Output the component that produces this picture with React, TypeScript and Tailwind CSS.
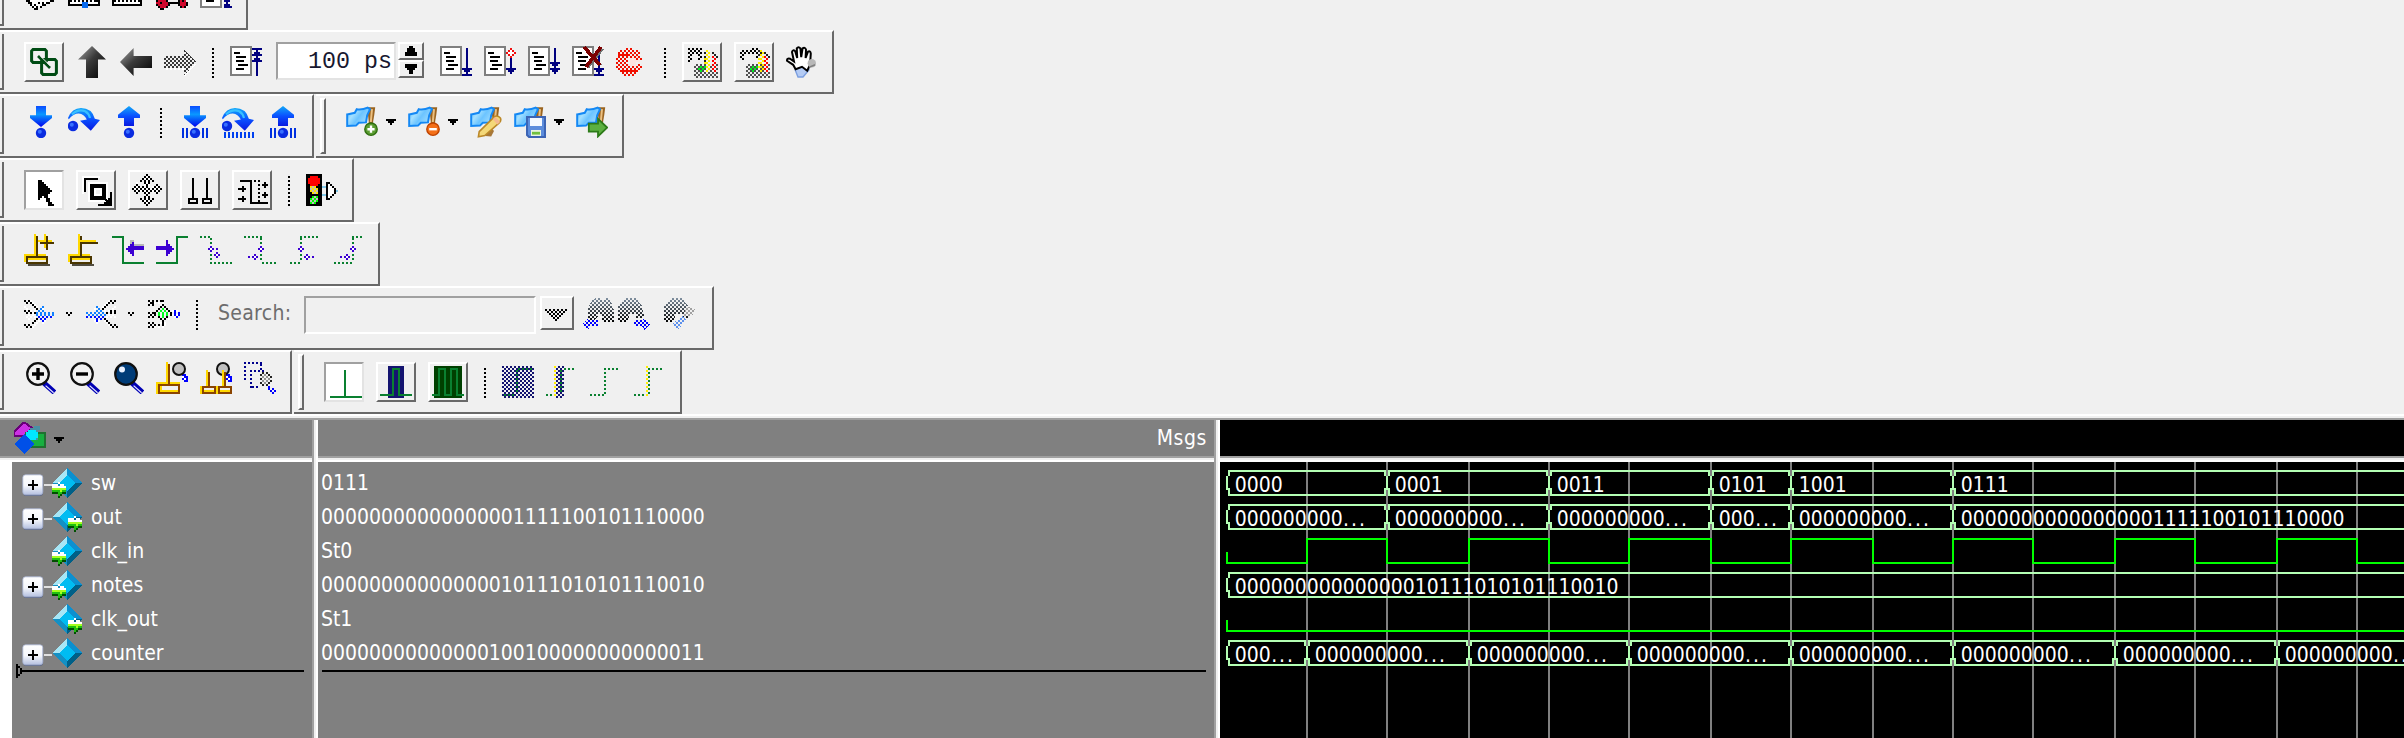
import React, { type ReactNode } from "react";

/* ---------- drawing helpers ---------- */

const NAVY = "#00007f";
const GREEN = "#0a8030";
const PURPLE = "#3c00d2";
const GOLD = "#ffd800";
const BROWN = "#4a3600";

type IconProps = { children: ReactNode; w?: number; h?: number; smooth?: boolean; className?: string };

/** One drawing unit is two screen pixels. */
function Icon({ children, w = 16, h = 16, smooth = false, className = "" }: IconProps) {
  return (
    <svg
      width={w * 2}
      height={h * 2}
      viewBox={`0 0 ${w} ${h}`}
      shapeRendering={smooth ? "auto" : "crispEdges"}
      className={`block shrink-0 ${className}`}
      fill="none"
    >
      {children}
    </svg>
  );
}

function Px({ rows, pal, x = 0, y = 0 }: { rows: string[]; pal: Record<string, string>; x?: number; y?: number }) {
  return (
    <>
      {rows.map((r, j) =>
        r.split("").map((c, i) =>
          pal[c] ? <rect key={`${i}-${j}`} x={x + i} y={y + j} width={1} height={1} fill={pal[c]} /> : null,
        ),
      )}
    </>
  );
}

const Stipple = ({ children }: { children: ReactNode }) => <g mask="url(#stipple)">{children}</g>;

function Defs() {
  return (
    <svg className="absolute h-0 w-0" width="0" height="0">
      <defs>
        <pattern id="checks" width="2" height="2" patternUnits="userSpaceOnUse">
          <rect width="1" height="1" fill="#fff" shapeRendering="crispEdges" />
          <rect x="1" y="1" width="1" height="1" fill="#fff" shapeRendering="crispEdges" />
        </pattern>
        <mask id="stipple" maskUnits="userSpaceOnUse" x="0" y="0" width="40" height="40">
          <rect width="40" height="40" fill="url(#checks)" />
        </mask>
        <linearGradient id="metal" x1="0" y1="0" x2="1" y2="1">
          <stop offset="0" stopColor="#a8a8a8" />
          <stop offset="0.45" stopColor="#3a3a3a" />
          <stop offset="1" stopColor="#000" />
        </linearGradient>
        <linearGradient id="azure" x1="0" y1="0" x2="0" y2="1">
          <stop offset="0" stopColor="#0a4cff" />
          <stop offset="0.4" stopColor="#0a98ff" />
          <stop offset="1" stopColor="#0000ee" />
        </linearGradient>
        <linearGradient id="azure2" x1="0" y1="0" x2="0" y2="1">
          <stop offset="0" stopColor="#12a8f8" />
          <stop offset="0.5" stopColor="#0a50ff" />
          <stop offset="1" stopColor="#0818e0" />
        </linearGradient>
        <linearGradient id="cloth" x1="0" y1="0" x2="1" y2=".6">
          <stop offset="0" stopColor="#4cb8ff" />
          <stop offset="0.35" stopColor="#a4e0ff" />
          <stop offset="0.6" stopColor="#6cc4ff" />
          <stop offset="1" stopColor="#a0dcff" />
        </linearGradient>
        <linearGradient id="binoc" x1="0" y1="0" x2="0" y2="1">
          <stop offset="0" stopColor="#8090a0" />
          <stop offset="1" stopColor="#000" />
        </linearGradient>
        <linearGradient id="plusbox" x1="0" y1="0" x2="0" y2="1">
          <stop offset="0" stopColor="#fff" />
          <stop offset="0.55" stopColor="#f4f6fb" />
          <stop offset="1" stopColor="#b4c0e0" />
        </linearGradient>
      </defs>
    </svg>
  );
}

/* ---------- toolbar pieces ---------- */

function Toolbar({ children, width, first = false }: { children: ReactNode; width: string; first?: boolean }) {
  return (
    <div
      className={`flex h-16 shrink-0 items-start border-t-2 border-r-2 border-b-2 border-t-white border-r-[#696969] border-b-[#696969] ${width}`}
    >
      {first ? (
        <div className="mt-[2px] mr-5 h-14 w-1 border-r-2 border-b-2 border-[#696969]" />
      ) : (
        <div className="mt-[2px] mr-5 ml-1 h-14 w-[6px] border-t-2 border-r-2 border-b-2 border-l-2 border-t-white border-r-[#696969] border-b-[#696969] border-l-white" />
      )}
      {children}
    </div>
  );
}

const Gap = () => <div className="w-3 shrink-0" />;

function Sep() {
  return (
    <Icon w={1} h={16} className="mx-4">
      <path d="M.5 1V16" stroke="#000" strokeDasharray="1 1" />
    </Icon>
  );
}

function Raised({ children }: { children: ReactNode }) {
  return (
    <div className="h-10 w-10 shrink-0 border-2 border-t-white border-r-[#696969] border-b-[#696969] border-l-white">
      <div className="-mt-[2px] -ml-[2px]">{children}</div>
    </div>
  );
}

function Sunken({ children }: { children: ReactNode }) {
  return (
    <div className="h-10 w-10 shrink-0 border-2 border-t-[#a0a0a0] border-r-[#e3e3e3] border-b-[#e3e3e3] border-l-[#a0a0a0] bg-white">
      <div className="-mt-[2px] -ml-[2px]">{children}</div>
    </div>
  );
}

function Caret() {
  return (
    <Icon w={5} h={3}>
      <path d="M0 0H5V1H4V2H3V3H2V2H1V1H0Z" fill="#000" />
    </Icon>
  );
}

/* ---------- file / edit icons (partly scrolled out) ---------- */

const bw = { "#": "#000", ".": "#fff", b: "#0a6cf0", r: "#d0082c", g: "#808080", n: NAVY };

const cutIcons: string[][] = [
  [" ##..........##", "  ##...#.#.##", "   #.#...##", "    #.#.#", "     ##"],
  ["##.#.#.#.#.#.###", "#......bbb.....#", "#######bbb######", "       bbb"],
  ["##.#.#.#.#.#.##", "#.............#", "###############"],
  ["#rrrr#     #r#r", "rr#rrr######rrr#", "#rrrrr#    #rrr#", " #rrr#      #r#", "  ##"],
  ["g..####...g nnn", "g.........g  n", "g.........g nnn", "ggggggggggg nnnnn"],
];

/* ---------- run control icons ---------- */

const DocBody = () => (
  <>
    <rect x=".5" y=".5" width="10" height="14" fill="#fff" stroke="#7f7f7f" />
    <path d="M2 3.5H5M3 5.5H8M3 7.5H7M4 9.5H9M3 11.5H7" stroke="#000" />
  </>
);

const RestartIcon = () => (
  <Icon>
    <DocBody />
    <Px pal={bw} x={11} rows={["", "nnnnn", "  n", " nnn", "nnnnn", "  n", " nnn", "nnnnn", "  n", "  n", "  n", "  n", "  n", "  n", "  n"]} />
  </Icon>
);
const RunIcon = () => (
  <Icon>
    <DocBody />
    <Px pal={bw} x={11} rows={["", "  n", "  n", "  n", "  n", "  n", "  n", "  n", "  n", "  n", "  n", "nnnnn", " nnn", "  n", "nnnnn"]} />
  </Icon>
);
const ContinueIcon = () => (
  <Icon>
    <DocBody />
    <Px pal={{ r: "#f01010", n: NAVY, w: "#fff" }} x={11} rows={["", "  r", " rwr", "rwwwr", " rwr", "  r", "  n", "  n", "  n", "  n", "  n", "nnnnn", " nnn", "  n"]} />
  </Icon>
);
const RunAllIcon = () => (
  <Icon>
    <DocBody />
    <Px pal={bw} x={11} rows={["", "  n", "  n", "  n", "  n", "  n", "  n", "  n", "nnnnn", " nnn", "  n", "nnnnn", " nnn", "  n"]} />
  </Icon>
);
const BreakIcon = () => (
  <Icon>
    <DocBody />
    <Px pal={bw} x={11} rows={["", "", "", "", "  n", "  n", "  n", "  n", "  n", "  n", "  n", "nnnnn", " nnn", "  n", "nnnnn"]} />
    <path d="M7 1 14.5 9.5M15.5 1.5 8 11" stroke="#707070" strokeWidth="1" />
    <path d="M6 .5 14 9.5M14.5 .5 7 10.5" stroke="#7c0000" strokeWidth="1.8" />
  </Icon>
);
const StopIcon = () => (
  <Icon>
    <path d="M7 5H12V8H10V10H7Z" fill="#fbe4e0" />
    <Stipple>
      <path d="M4 1H9V2H11V3H12V5H13V7H9V6H6V10H10V9H13V11H12V13H11V14H9V15H4V14H2V13H1V11H0V5H1V3H2V2H4Z" fill="#f01000" />
    </Stipple>
    <path d="M2 8.5H6M1 4.5H6M3 12.5H10" stroke="#f01000" strokeDasharray="1 1" />
  </Icon>
);

function ProfileIcon({ wide = false }: { wide?: boolean }) {
  const s = wide ? 1 : 0;
  return (
    <Icon w={20} h={20}>
      <Stipple>
        <path d={wide ? "M3 4H9V6H5V9H3ZM8 3H13V9H11V6H8Z" : "M3 3H10V9H8V6H5V10H3Z"} fill="#000" />
        <path d={`M${11 + s} 4H13V5H17V6H18V8H15V6H${12 + s}V12H${11 + s}Z`} fill="#222" />
        <path d="M6 11H18V18H6Z" fill="#505050" />
      </Stipple>
      <g transform={`translate(${s} 0)`}>
        <path d="M12.5 4V15M13.5 5V15" stroke="#ffee00" strokeDasharray="1 1" />
        <path d="M11.5 7V14" stroke="#ffee00" strokeDasharray="1 1" strokeDashoffset="1" />
      </g>
      <path d="M15.5 7V15" stroke="#f00" strokeDasharray="1 1" />
      <path d="M16.5 8V15" stroke="#f00" strokeDasharray="1 1" />
      <path d="M9 12.5H12M8 13.5H12M9 14.5H11" stroke="#00f020" strokeDasharray="1 1" />
    </Icon>
  );
}

const HandIcon = () => (
  <Icon smooth>
    <path d="M4.6 12 8 9.5 11.5 12 8.5 15.5H6Z" fill="#b4cbf4" stroke="#7b9fe0" strokeWidth=".7" />
    <path
      d="M4.8 11.6 3.6 9.4.5 7.4Q.4 6 2 6.4L4 7.8 3 3Q3.4 1.6 4.6 2.6L5.6 6 5.4 1.2Q6.2 0 7.2 1.2L7.6 5.6 8.3 1.2Q9.4.4 10 1.8L9.8 6 11 2.8Q12.2 2.2 12.4 3.8L12 9.5 10.6 12.4 8 10.4Z"
      fill="#fff"
      stroke="#000"
      strokeWidth="1"
    />
    <circle cx="12.9" cy="8.6" r="2.1" fill="#b8b8b8" />
    <path d="M11.6 10.6 14.6 9.4" stroke="#808080" strokeWidth=".8" />
  </Icon>
);

/* ---------- step icons ---------- */

const Ball = ({ x = 8.5, y = 13.5 }: { x?: number; y?: number }) => (
  <>
    <circle cx={x} cy={y} r="2.6" fill="#0a2ce0" />
    <circle cx={x - 0.6} cy={y - 0.6} r="1" fill="#3870ff" />
  </>
);
const sideBars = "M2.5 11V16M4.5 11V16M12.5 11V16M14.5 11V16";

const StepIn = ({ bars = false }: { bars?: boolean }) => (
  <Icon smooth>
    <path d="M6 0H11V4.6H14V6L8.5 10.5 3 6V4.6H6Z" fill="url(#azure)" />
    <Ball />
    {bars && <path d={sideBars} stroke="#0030e0" shapeRendering="crispEdges" />}
  </Icon>
);
const StepOut = ({ bars = false }: { bars?: boolean }) => (
  <Icon smooth>
    <path d="M8.5 0 14 4.4V6H11V10H6V6H3V4.4Z" fill="url(#azure2)" />
    <Ball />
    {bars && <path d={sideBars} stroke="#0030e0" shapeRendering="crispEdges" />}
  </Icon>
);
const StepOver = ({ bars = false }: { bars?: boolean }) => (
  <Icon smooth>
    <path d="M0 6Q2 1 6.5 1 12 1 13.4 6.4L16 7 11.4 12.4 6 7.4 9.4 6.8Q8 4 5.4 3.8 2.6 3.8.4 6.6Z" fill="url(#azure2)" />
    <path d="M2 4.2Q5 1.4 8.6 2.6 10.4 3.6 11 6" stroke="#38c0ff" strokeWidth="1.1" />
    <Ball x={2.5} y={10} />
    {bars && <path d="M1 14.5H16" stroke="#0040f0" strokeWidth="3" strokeDasharray="1 1" shapeRendering="crispEdges" />}
  </Icon>
);

/* ---------- bookmark icons ---------- */

function Flag({ badge }: { badge: "add" | "remove" | "edit" | "save" | "go" }) {
  return (
    <Icon smooth>
      <path d="M10.6 .6H14.6L14.2 4 13.2 10H11.6Z" fill="#9a6420" />
      <path d="M13 1.6 12.4 8" stroke="#ecc080" strokeWidth="1" />
      <path d="M.6 4.2 4.4 3.4 5.4 1.6Q8 2 10.8 .8L12 1.6 10.6 4.6 10 8.2 6.4 8.4 5 9.8.6 10Z" fill="url(#cloth)" stroke="#1488f4" strokeWidth="1" />
      {badge === "add" && (
        <>
          <circle cx="12.5" cy="11.6" r="3.1" fill="#5a9c30" stroke="#2f6f10" strokeWidth=".7" />
          <path d="M12.5 9.8V13.4M10.7 11.6H14.3" stroke="#fff" strokeWidth="1.2" />
        </>
      )}
      {badge === "remove" && (
        <>
          <circle cx="12.5" cy="11.6" r="3.1" fill="#f47018" stroke="#c04400" strokeWidth=".7" />
          <path d="M10.6 11.6H14.4" stroke="#fff" strokeWidth="1.2" />
        </>
      )}
      {badge === "edit" && (
        <>
          <path d="M9.4 9.5 12 12.5 10.6 15.3 7.6 15Z" fill="#a87838" />
          <path d="M4.6 12.8 12 5.6Q13.6 4.2 15.2 6 15.8 7.4 14.6 8.4L7.4 14.8 4.2 15.4Z" fill="#f4d878" stroke="#bc8828" strokeWidth=".8" />
          <path d="M12 6 14.4 8.6" stroke="#f4b890" strokeWidth="1.8" />
        </>
      )}
      {badge === "save" && (
        <>
          <path d="M6.5 5.5H15.5V15.5H7.5L6.5 14.5Z" fill="#5c8cdc" stroke="#3c64b4" strokeWidth="1" />
          <path d="M8 6H14V10H8Z" fill="#f4f8ff" />
          <path d="M8.5 12H13.5V15H8.5Z" fill="#e8f4e0" />
          <path d="M9 13.6H13" stroke="#70c040" strokeWidth="1.4" />
        </>
      )}
      {badge === "go" && <path d="M6.4 8.8H11V6.4L15.6 10.8 11 15.2V12.8H6.4Z" fill="#5cb040" stroke="#2c7a18" strokeWidth=".9" />}
    </Icon>
  );
}

/* ---------- mouse mode icons ---------- */

const SelectIcon = () => (
  <Icon w={20} h={20}>
    <Px
      x={7}
      y={5}
      pal={bw}
      rows={["##", "###", "####", "#####", "######", "#######", "######", "#####", "## ##", "#   ##", "    ##", "     ##", "     ###"]}
    />
  </Icon>
);
const ZoomModeIcon = () => (
  <Icon w={20} h={20}>
    <path d="M3 3.5H12M3.5 3V12" stroke="#fff" />
    <path d="M4 4.5H11M4.5 4V11" stroke="#000" />
    <path d="M6 6H16V16H6Z" fill="#fff" />
    <path d="M8 8H14V14H8Z" fill="#fff" stroke="#000" strokeWidth="2" />
    <path d="M11 17.5H18M17.5 11V18M13 13L17.5 17.5M14 16.5H18M16.5 14V18" stroke="#000" strokeWidth="1" />
    <path d="M10 10H12V12H10Z" fill="#efefef" />
  </Icon>
);
const PanIcon = () => (
  <Icon w={20} h={20}>
    <Px
      x={2}
      y={2}
      pal={bw}
      rows={[
        "       #",
        "      #.#",
        "     #.#.#",
        "    # #.# #",
        "  .   #.#",
        "  #   .#.   #",
        " #.# #.#. .#.#",
        "#.#.#.#.#.#.#.#",
        " #.#.#.#.#.#.#",
        "  #   #.#   #",
        "       #",
        "      #.#",
        "    # #.# #",
        "     #.#.#",
        "      #.#",
        "       #",
      ]}
    />
  </Icon>
);
const TwoCursorIcon = () => (
  <Icon w={20} h={20}>
    <path d="M6.5 4V14M13.5 4V14M4.5 14.5H8.5V16.5H4.5ZM11.5 14.5H15.5V16.5H11.5Z" stroke="#000" />
  </Icon>
);
const EditModeIcon = () => (
  <Icon w={20} h={20}>
    <path d="M4 5.5H9.5V16.5H18" stroke="#000" />
    <path d="M11 5.5H14M13.5 5V16" stroke="#000" strokeDasharray="1 1" />
    <path d="M3 9.5H7M5.5 8V11M3 14.5H7M5.5 13V16M15 7.5H18M16.5 6V9M15 12.5H18M16.5 11V14" stroke="#000" />
  </Icon>
);
const TrafficIcon = () => (
  <Icon>
    <path d="M0 0H8V16H0Z" fill="#000" />
    <path d="M2 1H6V2H7V5H6V6H2V5H1V2H2Z" fill="#f00" />
    <path d="M3 6H5V7H6V9H5V10H3V9H2V7H3ZM3 11H5V12H6V14H5V15H3V14H2V12H3Z" fill="#c0c0c0" />
    <Stipple>
      <path d="M2 6H6V10H2Z" fill="#ffe000" />
      <path d="M2 11H6V15H2Z" fill="#0f0" />
    </Stipple>
    <path d="M3 7H4V8H3ZM4 8H5V9H4Z" fill="#ffe000" />
    <path d="M8 6.5H10M8 10.5H10M15 8.5H16" stroke="#80c8e8" />
    <path d="M11 5H12V6H13V7H14V10H13V11H12V12H11Z" fill="#fff" />
    <Px
      x={10}
      y={4}
      pal={bw}
      rows={["##", "# #", "#  #", "#   #", "#   #", "#   #", "#  #", "# #", "##"]}
    />
  </Icon>
);

/* ---------- wave cursor icons ---------- */

function CursorMark({ sign }: { sign: "+" | "-" }) {
  return (
    <Icon>
      <path d="M5.5 0V10M0 10.5H11M.5 10V14" stroke={GOLD} />
      <path d="M1 11H12V15H1Z" fill={BROWN} />
      <path d="M2 12H11V13H2Z" fill={GOLD} />
      <path d="M2 13H11V14H2Z" fill="#efefef" />
      <path d="M6.5 1V11" stroke={BROWN} />
      <path d="M2 15.5H13" stroke="#504c40" />
      <path d={sign === "+" ? "M10.5 0V7M7 3.5H14" : "M6 3.5H14"} stroke={GOLD} />
      <path d={sign === "+" ? "M11.5 1V8M8 4.5H15" : "M7 4.5H15"} stroke={BROWN} />
    </Icon>
  );
}
const PrevEdge = () => (
  <Icon>
    <path d="M9 3H11V5H16V6H9Z" fill="#b8b8b8" />
    <path d="M0 1.5H5.5V14.5H16" stroke={GREEN} />
    <path d="M7 7H8V6H9V5H10V4H11V6H16V8H11V11H10V10H9V9H8V8H7Z" fill={PURPLE} />
  </Icon>
);
const NextEdge = () => (
  <Icon>
    <path d="M0 14.5H10.5V1.5H16" stroke={GREEN} />
    <path d="M9 7H8V6H7V5H6V3H5V6H0V8H5V11H6V10H7V9H8V8H9Z" fill={PURPLE} />
  </Icon>
);
const Gem = ({ x, y, tail = 0 }: { x: number; y: number; tail?: number }) => (
  <>
    <Px x={x} y={y} pal={{ p: PURPLE, w: "#fff" }} rows={[" p", "pwp", " p"]} />
    {tail !== 0 && <rect x={x + tail} y={y + 1} width="1" height="1" fill={PURPLE} />}
  </>
);
const DotEdge = ({ d, a, b, ta = 0, tb = 0 }: { d: string; a: [number, number]; b: [number, number]; ta?: number; tb?: number }) => (
  <Icon>
    <path d={d} stroke={GREEN} strokeDasharray="1 1" />
    <Gem x={a[0]} y={a[1]} tail={ta} />
    <Gem x={b[0]} y={b[1]} tail={tb} />
  </Icon>
);

/* ---------- causality / search icons ---------- */

const tracePal = { "#": "#000", ".": "#fff", b: "#1080ff", c: "#0010ff" };

const TraceIn = () => (
  <Icon>
    <Px
      pal={tracePal}
      rows={["", "# #.", " # #.", "    #.", ".    #.  b", " .    # b.", "# #. . b b", " # #.#b b b b b", "  . . b b b b b", " . . . c c c c", "  .   # c c", "     # . c.", "    # .  .", "# #  .", " # #."]}
    />
  </Icon>
);
const TraceOut = () => (
  <Icon>
    <Px
      pal={tracePal}
      rows={["", "           .# #", "          .# #", "         .#", "     b  .#    .", "    . b #    .", "     b b . .# #", "b b b b b # # #", " b b b b b . .", "c c c c c . . .", "     c c #", "    .c.  .#", "     .    .#", "           .# #", "            .# #"]}
    />
  </Icon>
);
const TraceNet = () => (
  <Icon>
    <Px
      pal={{ "#": "#000", ".": "#fff", g: "#00ff20", b: "#0000ff" }}
      rows={["", "# # # ##", " ##. . .", "# #   .#", "      # #", "     # g #", "    # g g # .b.", "# ## g g g # b b", " # # g g g #.b.b", "# #  # g #   .b", "      # # .", "       #", "# #   .#.", " # # # #.", "# #. . ."]}
    />
  </Icon>
);

function Binoculars({ arrow }: { arrow: "left" | "right" | "none" }) {
  return (
    <Icon>
      <Stipple>
        <path
          d={arrow === "left" ? "M5 1 7 0H9V1H11V0H13L15 3 16 6V12H10V8H8V9L6 11H3V5Z" : "M2 2 4 0H10V2L12 4 13 8V10H9V8H6L5 12H0V4Z"}
          fill="url(#binoc)"
        />
        {arrow === "left" && <path d="M0 13 3 10 4 11H8V14H4L3 16Z" fill="#0000ff" />}
        {arrow === "right" && <path d="M16 13 13 10 12 11H8V14H12L13 16Z" fill="#0000ff" />}
        {arrow === "none" && (
          <>
            <path d="M11 4 16 6 14 9 10 9Z" fill="#a0a0a0" />
            <path d="M9 9 11 11 7 16 4 13Z" fill="#5c90ec" />
          </>
        )}
      </Stipple>
    </Icon>
  );
}

/* ---------- zoom icons ---------- */

function Lens({ kind }: { kind: "in" | "out" | "full" }) {
  return (
    <Icon smooth>
      <path d="M10 10.5 15.2 15.2" stroke="#0000b4" strokeWidth="2.6" />
      <path d="M10.8 11.8 14.8 15.4" stroke="#e8e8ff" strokeWidth=".6" />
      <circle cx="7" cy="6" r="5.4" fill={kind === "full" ? "#003c78" : "#f2f2f2"} stroke="#101010" strokeWidth="1.1" />
      {kind === "in" && <path d="M7 3V9M4 6H10" stroke="#000" strokeWidth="1.7" />}
      {kind === "out" && <path d="M4 6H10" stroke="#000" strokeWidth="1.7" />}
      {kind === "full" && <circle cx="5" cy="3.8" r="1.5" fill="#e8f0ff" />}
    </Icon>
  );
}
const SmallLens = () => (
  <>
    <path d="M13.5 6V9M14.5 6V10M15.5 7V10" stroke="#0000ff" />
    <path d="M13.5 7V8M14.5 8V9" stroke="#fff" />
    <circle cx="11.5" cy="3.5" r="3" fill="#c0c0c0" stroke="#111" strokeWidth="1" shapeRendering="auto" />
  </>
);
const ZoomCursor = () => (
  <Icon>
    <path d="M.5 10.5H12M.5 10V16" stroke={GOLD} />
    <path d="M5.5 0V11" stroke={GOLD} />
    <path d="M6.5 1V11M1.5 11.5H11.5V15.5H1.5Z" stroke="#8a4400" />
    <path d="M2 14.5H11M2.5 12V15" stroke={GOLD} />
    <SmallLens />
  </Icon>
);
const ZoomCursors = () => (
  <Icon>
    <SmallLens />
    <path d="M0 12.5H7M.5 12V16M3.5 4V12M8 12.5H15M8.5 12V16M11.5 4V12" stroke={GOLD} />
    <path d="M4.5 5V12M1.5 12.5H7.5V15.5H1.5ZM12.5 5V12M9.5 12.5H15.5V15.5H9.5Z" stroke="#8a4400" />
    <path d="M2 14.5H7M10 14.5H15" stroke={GOLD} />
  </Icon>
);
const ZoomOther = () => (
  <Icon>
    <path d="M0 .5H9M.5 0V9M3 4.5H8M3.5 4V13M4 12.5H8M8.5 1V4M9.5 4V6" stroke="#00008c" strokeDasharray="1 1" />
    <Stipple>
      <path d="M9 6H12V7H14V10H12V12H9V11H8V7H9Z" fill="#909090" />
    </Stipple>
    <path d="M9 5.5H12.5V6.5H13.5V10.5H12.5V11.5H9.5V10.5H8.5V6.5H9" stroke="#222" strokeDasharray="1 1" />
    <Px x={12} y={12} pal={{ b: "#0000ff" }} rows={["b", "b b", " b b", "  b"]} />
  </Icon>
);

/* ---------- wave format icons ---------- */

const FormatLiteral = () => (
  <Icon w={20} h={20}>
    <path d="M10.5 4V17M3 17.5H19" stroke={GREEN} />
  </Icon>
);
const FormatLogic = () => (
  <Icon w={20} h={20}>
    <path d="M6 2H14V18H6Z" fill="#141470" />
    <path d="M2 16.5H8.5V3.5H11.5V16.5H18" stroke={GREEN} />
  </Icon>
);
const FormatEvent = () => (
  <Icon w={20} h={20}>
    <path d="M3 2H17V18H3Z" fill="#004000" />
    <path d="M2 16.5H5.5V3.5H8.5V16.5H11.5V3.5H14.5V16.5H18" stroke={GREEN} />
  </Icon>
);

/* ---------- signal list ---------- */

type Dir = "in" | "out" | "none";
const signals: { name: string; value: string; dir: Dir; bus: boolean }[] = [
  { name: "sw", value: "0111", dir: "in", bus: true },
  { name: "out", value: "00000000000000001111100101110000", dir: "out", bus: true },
  { name: "clk_in", value: "St0", dir: "in", bus: false },
  { name: "notes", value: "00000000000000010111010101110010", dir: "in", bus: true },
  { name: "clk_out", value: "St1", dir: "out", bus: false },
  { name: "counter", value: "00000000000000100100000000000011", dir: "none", bus: true },
];

function SignalGem({ dir }: { dir: Dir }) {
  const ax = dir === "in" ? 0 : 8;
  return (
    <Icon w={15} h={15}>
      <path d="M7.5 0V7.5H0Z" fill="#a6e6f6" />
      <path d="M7.5 0V7.5H15Z" fill="#0c90d0" />
      <path d="M7.5 15V7.5H0Z" fill="#1490c4" />
      <path d="M7.5 15V7.5H15Z" fill="#006088" />
      <path d="M7.5 3.5 11.5 7.5 7.5 11.5 3.5 7.5Z" fill="#00bcf2" />
      {dir !== "none" && (
        <Px
          x={ax}
          y={7}
          pal={{ w: "#fff", l: "#a4ff20", g: "#20c010", d: "#005000" }}
          rows={["   w", "www ww", "wwwwwww", "lllllll", "gggglgg", "dddggdd", "   gd", "   d"]}
        />
      )}
    </Icon>
  );
}

const Expander = () => (
  <Icon w={11} h={11} smooth>
    <rect x=".6" y="1.1" width="9.9" height="9.9" rx="1.6" fill="#5c6888" />
    <rect x=".4" y=".4" width="10" height="10" rx="1.4" fill="url(#plusbox)" stroke="#a4b0d0" strokeWidth=".4" />
    <path d="M3 5.5H8M5.5 3V8" stroke="#000" shapeRendering="crispEdges" />
  </Icon>
);

/* ---------- wave view ---------- */

const edges = [43, 83, 124, 164, 204, 245, 285, 326, 366, 406, 447, 487, 528, 568];
const END = 592;
const BUS = "#b4ffb4";

const zeros = "000000000...";
type Seg = [number, string];
const sw: Seg[] = [[3, "0000"], [83, "0001"], [164, "0011"], [245, "0101"], [285, "1001"], [366, "0111"]];
const out: Seg[] = [[3, zeros], [83, zeros], [164, zeros], [245, "000..."], [285, zeros], [366, signals[1].value]];
const notes: Seg[] = [[3, signals[3].value]];
const counter: Seg[] = [[3, "000..."], [43, zeros], [124, zeros], [204, zeros], [285, zeros], [366, zeros], [447, zeros], [528, zeros]];

function Bus({ segs, y }: { segs: Seg[]; y: number }) {
  return (
    <g transform={`translate(0 ${y})`}>
      {segs.map(([x, label], i) => {
        const end = i + 1 < segs.length ? segs[i + 1][0] : END + 4;
        const digits = label.replace("...", "");
        return (
          <g key={x}>
            <path
              d={`M${x + 1.5} 3V.5H${end - 0.5}V3M${x + 1.5} 9V12.5H${end - 0.5}V9M${x + 0.5} 3V10`}
              stroke={BUS}
              shapeRendering="crispEdges"
            />
            <text x={x + 4.4} y={11.1} fill="#fff" className="font-['DejaVu_Sans_Condensed','DejaVu_Sans',sans-serif] text-[10.48px]">
              {digits}
              {digits !== label && (
                <tspan dx="0.2" className="tracking-[0.95px]">
                  ...
                </tspan>
              )}
            </text>
          </g>
        );
      })}
    </g>
  );
}

function Waves() {
  let clk = "M3.5 45V50.5";
  edges.forEach((x, i) => {
    clk += `H${x + 0.5}V${i % 2 === 0 ? 38.5 : 50.5}`;
  });
  clk += `H${END}`;
  return (
    <svg className="block" width={END * 2} height={276} viewBox={`0 0 ${END} 138`} fill="none">
      <g shapeRendering="crispEdges">
        {edges.map((x) => (
          <path key={x} d={`M${x + 0.5} 0V138`} stroke="#808080" />
        ))}
        <path d={clk} stroke="#00ff00" />
        <path d={`M3.5 79V84.5H${END}`} stroke="#00ff00" />
      </g>
      <Bus segs={sw} y={4} />
      <Bus segs={out} y={21} />
      <Bus segs={notes} y={55} />
      <Bus segs={counter} y={89} />
    </svg>
  );
}

const HeaderRule = () => <div className="h-[6px] border-t-2 border-b-2 border-t-[#a0a0a0] border-b-white bg-[#f0f0f0]" />;
const Sash = () => <div className="w-[6px] shrink-0 border-r-2 border-l-2 border-r-white border-l-[#a0a0a0] bg-[#f0f0f0]" />;

export default function App() {
  return (
    <div className="relative flex h-[738px] w-[2404px] flex-col overflow-hidden bg-[#f0f0f0] font-['DejaVu_Sans_Condensed','DejaVu_Sans',sans-serif] text-[20.96px] text-white">
      <Defs />

      <div className="flex h-[30px] w-[248px] shrink-0 border-r-2 border-b-2 border-[#696969]">
        <div className="mr-5 h-[26px] w-1 shrink-0 border-r-2 border-b-2 border-[#696969]" />
        <div className="flex gap-3">
          {cutIcons.map((rows, i) => (
            <Icon key={i} h={6}>
              <Px rows={rows} pal={bw} />
            </Icon>
          ))}
        </div>
      </div>

      <Toolbar first width="w-[834px]">
        <div className="mt-[10px] flex h-10 items-center">
          <Raised>
            <Icon w={20} h={20} smooth>
              <path d="M4.5 3.8H10.5L11.2 4.5V9.5L10.5 10.2H4.5L3.8 9.5V4.5Z" stroke="#004c14" strokeWidth="1.5" />
              <path d="M9.5 8.8H15.5L16.2 9.5V15.5L15.5 16.2H9.5L8.8 15.5V9.5Z" stroke="#004c14" strokeWidth="1.5" />
              <path d="M7 7 13 13" stroke="#004c14" strokeWidth="1.3" />
              <path d="M8.2 7 13 11.8" stroke="#f0f0f0" strokeWidth=".5" />
            </Icon>
          </Raised>
          <Gap />
          <Icon smooth>
            <path d="M8 0 15 6.8H11V16H5V6.8H1Z" fill="url(#metal)" />
          </Icon>
          <Gap />
          <Icon smooth>
            <path d="M0 8 6.8 1V5H16V11H6.8V15Z" fill="url(#metal)" />
          </Icon>
          <Gap />
          <Icon>
            <Stipple>
              <path d="M16 9 10 2V5H0V12H10V16Z" fill="#fff" />
            </Stipple>
            <path d="M16 8 10 2V5H0V11H10V15Z" fill="#383838" mask="url(#stipple)" />
          </Icon>
          <Sep />
          <RestartIcon />
          <div className="ml-[14px] flex h-[38px] w-[120px] items-center justify-end self-start border-2 border-t-[#a0a0a0] border-r-[#e3e3e3] border-b-[#e3e3e3] border-l-[#a0a0a0] bg-white pt-1 pr-[2px] font-['Liberation_Mono',monospace] text-[23.3px] leading-none text-[#181830]">
            100 ps
          </div>
          <div className="mr-4 ml-[2px] flex w-[26px] flex-col self-start">
            <div className="flex h-[18px] items-center justify-center border-2 border-t-white border-r-[#696969] border-b-[#696969] border-l-white">
              <Icon w={6} h={5}>
                <path d="M2 0H4V1H5V3H6V5H0V3H1V1H2Z" fill="#000" />
              </Icon>
            </div>
            <div className="flex h-[18px] items-center justify-center border-2 border-t-white border-r-[#696969] border-b-[#696969] border-l-white">
              <Icon w={6} h={5}>
                <path d="M0 0H6V2H5V3H4V5H2V3H1V2H0Z" fill="#000" />
              </Icon>
            </div>
          </div>
          <RunIcon />
          <Gap />
          <ContinueIcon />
          <Gap />
          <RunAllIcon />
          <Gap />
          <BreakIcon />
          <Gap />
          <StopIcon />
          <Sep />
          <Raised>
            <ProfileIcon />
          </Raised>
          <Gap />
          <Raised>
            <ProfileIcon wide />
          </Raised>
          <Gap />
          <HandIcon />
        </div>
      </Toolbar>

      <div className="flex shrink-0 gap-[2px]">
        <Toolbar first width="w-[314px]">
          <div className="mt-[10px] flex items-center">
            <StepIn />
            <Gap />
            <StepOver />
            <Gap />
            <StepOut />
            <Sep />
            <StepIn bars />
            <Gap />
            <StepOver bars />
            <Gap />
            <StepOut bars />
          </div>
        </Toolbar>
        <Toolbar width="w-[308px]">
          <div className="mt-[10px] flex items-center gap-3">
            <div className="flex items-center gap-2">
              <Flag badge="add" />
              <Caret />
            </div>
            <div className="flex items-center gap-2">
              <Flag badge="remove" />
              <Caret />
            </div>
            <Flag badge="edit" />
            <div className="flex items-center gap-2">
              <Flag badge="save" />
              <Caret />
            </div>
            <Flag badge="go" />
          </div>
        </Toolbar>
      </div>

      <Toolbar first width="w-[354px]">
        <div className="mt-[10px] flex h-10 items-center">
          <Sunken>
            <SelectIcon />
          </Sunken>
          <Gap />
          <Raised>
            <ZoomModeIcon />
          </Raised>
          <Gap />
          <Raised>
            <PanIcon />
          </Raised>
          <Gap />
          <Raised>
            <TwoCursorIcon />
          </Raised>
          <Gap />
          <Raised>
            <EditModeIcon />
          </Raised>
          <Sep />
          <TrafficIcon />
        </div>
      </Toolbar>

      <Toolbar first width="w-[380px]">
        <div className="mt-[10px] flex items-center gap-3">
          <CursorMark sign="+" />
          <CursorMark sign="-" />
          <PrevEdge />
          <NextEdge />
          <DotEdge d="M0 1.5H6M5.5 2V14M5 14.5H16" a={[4, 6]} b={[7, 9]} ta={4} />
          <DotEdge d="M0 1.5H9M8.5 2V14M9 14.5H16" a={[7, 6]} b={[4, 10]} tb={-2} />
          <DotEdge d="M1 14.5H6M6.5 2V14M6 1.5H15" a={[5, 6]} b={[8, 10]} tb={4} />
          <DotEdge d="M1 14.5H10M10.5 2V14M10 1.5H15" a={[9, 6]} b={[6, 10]} tb={-2} />
        </div>
      </Toolbar>

      <Toolbar first width="w-[714px]">
        <div className="mt-2 flex items-start">
          <div className="mt-[2px] flex items-center">
            <TraceIn />
            <Icon w={3} h={2} className="mr-[14px] ml-[10px]">
              <path d="M0 0H1V1H2V0H3V1H2V2H1V1H0Z" fill="#000" />
            </Icon>
            <TraceOut />
            <Icon w={3} h={2} className="mr-[14px] ml-[10px]">
              <path d="M0 0H1V1H2V0H3V1H2V2H1V1H0Z" fill="#000" />
            </Icon>
            <TraceNet />
            <Sep />
          </div>
          <span className="mt-[2px] ml-1 w-[86px] text-[21px] leading-[30px] tracking-[0.3px] text-[#6d6d6d]">Search:</span>
          <div className="h-[38px] w-[232px] border-2 border-t-[#a0a0a0] border-r-white border-b-white border-l-[#a0a0a0]" />
          <div className="mr-2 ml-1 flex h-[34px] w-[34px] items-center justify-center border-2 border-t-white border-r-[#696969] border-b-[#696969] border-l-white">
            <Icon w={12} h={6} className="mt-1">
              <Stipple>
                <path d="M0 0H11V1H10V2H9V3H8V4H7V5H6V6H5V5H4V4H3V3H2V2H1V1H0Z" fill="#000" />
              </Stipple>
            </Icon>
          </div>
          <div className="mt-[2px] flex">
            <Binoculars arrow="left" />
            <div className="w-1" />
            <Binoculars arrow="right" />
            <div className="w-[14px]" />
            <Binoculars arrow="none" />
          </div>
        </div>
      </Toolbar>

      <div className="flex shrink-0 gap-[2px]">
        <Toolbar first width="w-[292px]">
          <div className="mt-[10px] flex items-center gap-3">
            <Lens kind="in" />
            <Lens kind="out" />
            <Lens kind="full" />
            <ZoomCursor />
            <ZoomCursors />
            <ZoomOther />
          </div>
        </Toolbar>
        <Toolbar width="w-[388px]">
          <div className="mt-[10px] flex h-10 items-center">
            <Sunken>
              <FormatLiteral />
            </Sunken>
            <Gap />
            <Raised>
              <FormatLogic />
            </Raised>
            <Gap />
            <Raised>
              <FormatEvent />
            </Raised>
            <Sep />
            <div className="flex gap-3">
              <Icon>
                <Stipple>
                  <path d="M0 0H16V16H0Z" fill="#141470" />
                </Stipple>
                <path d="M1 14.5H7M7.5 2V14M8 1.5H16" stroke={GREEN} strokeDasharray="1 1" />
              </Icon>
              <Icon>
                <Stipple>
                  <path d="M5 0H9V16H5Z" fill="#141470" />
                </Stipple>
                <path d="M0 14.5H4M7.5 2V13M9 1.5H15" stroke={GREEN} strokeDasharray="1 1" />
                <path d="M4.5 0V15" stroke="#ffee00" strokeDasharray="1 1" />
              </Icon>
              <Icon>
                <path d="M0 14.5H7M7.5 1V14M9 1.5H15" stroke={GREEN} strokeDasharray="1 1" />
              </Icon>
              <Icon>
                <path d="M0 14.5H6M7.5 1V14M9 1.5H15" stroke={GREEN} strokeDasharray="1 1" />
                <path d="M6.5 0V15" stroke="#ffee00" strokeDasharray="1 1" />
              </Icon>
            </div>
          </div>
        </Toolbar>
      </div>

      <div className="h-[6px] shrink-0 border-t-2 border-b-2 border-t-white border-b-[#a0a0a0]" />

      <div className="flex h-[318px]">
        <div className="flex w-[312px] shrink-0 flex-col">
          <div className="flex h-9 items-center bg-[#808080] pl-[14px]">
            <Icon>
              <path d="M0 5 5 0 9 3 5 7H0Z" fill="#cc30e4" stroke="#680078" strokeWidth="1" />
              <path d="M6 5.5H15.5V12.5H8Z" fill="#18b040" stroke="#207030" />
              <path d="M8 3H10V2H13V4H12V9H8Z" fill="#4a90a4" />
              <path d="M7 4H11V5H12V8H11V9H7V8H6V5H7Z" fill="#00e8ff" />
              <path d="M5 6 10 11 5 16 0 11Z" fill="#0050e8" />
            </Icon>
            <div className="mt-[3px] ml-2">
              <Caret />
            </div>
          </div>
          <HeaderRule />
          <div className="flex grow bg-white pl-3">
            <div className="grow bg-[#808080] pt-1">
              {signals.map((s) => (
                <div key={s.name} className="flex h-[34px] items-start pl-[10px]">
                  <div className="mt-2 w-[22px]">{s.bus && <Expander />}</div>
                  <div className={`mt-[18px] h-[2px] w-2 ${s.bus ? "bg-[#e0e0e0]" : ""}`} />
                  <div className="mt-[2px]">
                    <SignalGem dir={s.dir} />
                  </div>
                  <span className="ml-[9px] leading-[34px]">{s.name}</span>
                </div>
              ))}
              <div className="-mt-[6px] flex items-center pl-1">
                <Icon w={3} h={7}>
                  <path d="M.5 0V7M1 1.5H2M1 5.5H2M2.5 2V5" stroke="#000" />
                </Icon>
                <div className="mr-2 h-[2px] grow bg-black" />
              </div>
            </div>
          </div>
        </div>
        <Sash />
        <div className="flex w-[896px] shrink-0 flex-col">
          <div className="flex h-9 items-center justify-end bg-[#808080] pr-[7px] leading-none tracking-[0.6px]">Msgs</div>
          <HeaderRule />
          <div className="grow bg-[#808080] pt-1 pl-[3px]">
            {signals.map((s) => (
              <div key={s.name} className="h-[34px] leading-[34px]">
                {s.value}
              </div>
            ))}
            <div className="mr-2 ml-[1px] h-[2px] bg-black" />
          </div>
        </div>
        <Sash />
        <div className="flex grow flex-col bg-black">
          <div className="h-9" />
          <HeaderRule />
          <Waves />
        </div>
      </div>
    </div>
  );
}
